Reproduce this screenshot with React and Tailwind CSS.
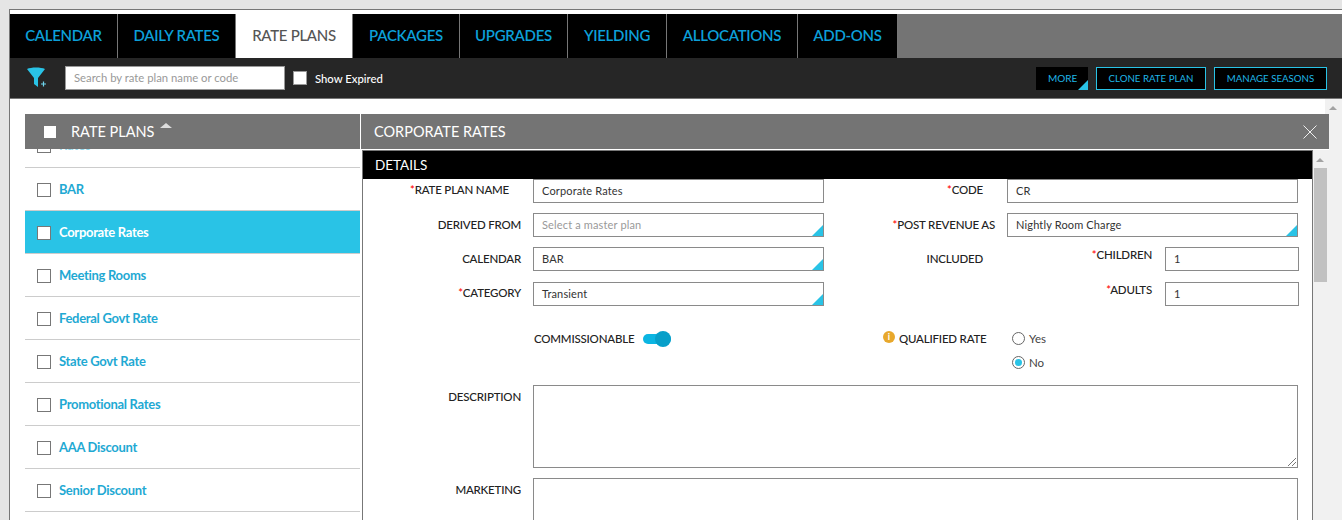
const tabs = [
  { label: "CALENDAR", w: "w-[108px]" },
  { label: "DAILY RATES", w: "w-[118px]" },
  { label: "RATE PLANS", w: "w-[117px]", active: true },
  { label: "PACKAGES", w: "w-[107px]" },
  { label: "UPGRADES", w: "w-[108px]" },
  { label: "YIELDING", w: "w-[99px]" },
  { label: "ALLOCATIONS", w: "w-[131px]" },
  { label: "ADD-ONS", w: "w-[100px]" },
];

const plans = [
  "BAR",
  "Corporate Rates",
  "Meeting Rooms",
  "Federal Govt Rate",
  "State Govt Rate",
  "Promotional Rates",
  "AAA Discount",
  "Senior Discount",
];

const Corner = ({ size = "border-l-[11px] border-b-[11px]" }) => (
  <span className={`absolute right-0 bottom-0 w-0 h-0 border-solid border-l-transparent border-b-[#29c3e6] ${size}`} />
);

const Label = ({ children, required, className = "" }) => (
  <div className={`text-[11.5px] leading-[15px] font-medium tracking-[-0.2px] text-[#222] text-right whitespace-nowrap ${className}`}>
    {required && <span className="text-[#f00]">*</span>}
    {children}
  </div>
);

const Field = ({ value, placeholder, select, className = "" }) => (
  <div className={`relative h-6 border border-[#8a8a8a] bg-white pl-2 text-[11px] leading-[21px] tracking-[0.15px] ${placeholder ? "text-[#999]" : "text-[#333]"} ${className}`}>
    {value || placeholder}
    {select && <Corner />}
  </div>
);

const Check = ({ className = "" }) => (
  <span className={`block w-[14px] h-[14px] border border-[#777] bg-white ${className}`} />
);

const App = () => {
  return (
    <div className="h-[520px] w-[1342px] overflow-hidden bg-[#e5e5e5] pt-[9px] pl-[9px] font-['Lato',sans-serif]">
      <div className="h-[511px] border-t border-l border-[#777] bg-white pt-1 overflow-hidden">
        {/* tabs */}
        <div className="flex h-11 bg-[#747474]">
          {tabs.map((t) => (
            <div
              key={t.label}
              className={`${t.w} flex items-center justify-center pb-[2px] border-r border-[#777] text-[15px] tracking-[-0.3px] ${
                t.active ? "bg-white text-[#555] font-medium" : "bg-black text-[#0c9fd8] font-semibold"
              }`}
            >
              {t.label}
            </div>
          ))}
        </div>

        {/* toolbar */}
        <div className="flex items-center h-[41px] bg-[#262626] border-b border-[#777] pr-[15px]">
          <svg viewBox="0 0 20 22" className="w-[20px] h-[22px] ml-[17px]">
            <path d="M0 2 C4 0 14 0 18 2 L11 11 L11 20 L7 17 L7 11 Z" fill="#29c3e6" />
            <path d="M14 17 h5 M16.5 14.5 v5" stroke="#6fd6ee" strokeWidth="1.2" />
          </svg>
          <div className="ml-[18px] w-[220px] h-6 border border-[#999] bg-white pl-2 text-[11.3px] leading-[22px] text-[#999]">
            Search by rate plan name or code
          </div>
          <Check className="ml-2 border-[#999]" />
          <span className="ml-2 mt-[2px] text-[11.3px] font-medium text-white">Show Expired</span>
          <div className="relative ml-auto w-[52px] h-[23px] bg-black pl-3 text-[10px] leading-[22px] text-[#1fb6e6]">
            MORE
            <Corner size="border-l-[10px] border-b-[10px]" />
          </div>
          <div className="ml-2 w-[110px] h-[23px] border border-[#29c3e6] bg-black text-center text-[9.7px] leading-[21px] text-[#1fb6e6]">
            CLONE RATE PLAN
          </div>
          <div className="ml-2 w-[113px] h-[23px] border border-[#29c3e6] bg-black text-center text-[9.7px] leading-[21px] text-[#1fb6e6]">
            MANAGE SEASONS
          </div>
        </div>

        {/* body */}
        <div className="flex h-[421px]">
          <div className="flex w-[1315px] shrink-0 pl-[15px] pt-[15px]">
            {/* list */}
            <div className="w-[335px] shrink-0">
              <div className="flex items-center h-[35px] bg-[#747474] pl-[19px] text-white">
                <span className="block w-3 h-3 bg-white" />
                <span className="ml-[15px] mt-px text-[14.5px] leading-none">RATE PLANS</span>
                <span className="ml-[6px] mb-3 w-0 h-0 border-x-[6px] border-x-transparent border-b-[5px] border-b-[#ddd]" />
              </div>
              <div className="flex h-[19px] border-b border-[#ccc] overflow-hidden pl-3">
                <Check className="-mt-[10px]" />
                <span className="ml-2 -mt-[12px] text-[13px] font-semibold leading-4 text-[#8fd6ea]">Rates</span>
              </div>
              {plans.map((p) => {
                const active = p === "Corporate Rates";
                return (
                  <div
                    key={p}
                    className={`flex items-center h-[43px] pt-[2px] border-b border-[#ccc] pl-3 text-[13px] font-bold tracking-[-0.3px] ${
                      active ? "bg-[#29c3e6] text-white" : "text-[#1fa9d3]"
                    }`}
                  >
                    <Check />
                    <span className="ml-2">{p}</span>
                  </div>
                );
              })}
            </div>

            {/* detail panel */}
            <div className="relative z-10 w-[969px] shrink-0 self-start bg-white">
              <div className="relative flex items-center h-[35px] border-l border-white bg-[#747474] pl-[13px] text-[14.5px] text-white">
                CORPORATE RATES
                <svg viewBox="0 0 14 14" className="absolute right-[12px] top-[11px] w-[14px] h-[14px]">
                  <path d="M0.5 0.5 L13.5 13.5 M13.5 0.5 L0.5 13.5" stroke="#eee" strokeWidth="1" />
                </svg>
              </div>
              <div className="flex mt-px ml-[2px]">
                <div className="w-[951px] h-[400px] border-l border-r border-t border-[#777] shrink-0">
                  <div className="h-7 bg-black pl-3 text-[13.5px] leading-[28px] text-white">DETAILS</div>
                  <div className="flex h-6">
                    <Label required className="w-[146px] mt-[3px]">RATE PLAN NAME</Label>
                    <Field value="Corporate Rates" className="ml-6 w-[291px]" />
                    <Label required className="w-[159px] mt-[3px]">CODE</Label>
                    <Field value="CR" className="ml-6 w-[291px]" />
                  </div>
                  <div className="flex h-6 mt-[10px]">
                    <Label className="w-[158px] mt-[4px]">DERIVED FROM</Label>
                    <Field placeholder="Select a master plan" select className="ml-[12px] w-[291px]" />
                    <Label required className="w-[171px] mt-[4px]">POST REVENUE AS</Label>
                    <Field value="Nightly Room Charge" select className="ml-3 w-[291px]" />
                  </div>
                  <div className="flex h-6 mt-[10px]">
                    <Label className="w-[158px] mt-[4px]">CALENDAR</Label>
                    <Field value="BAR" select className="ml-[12px] w-[291px]" />
                    <Label className="w-[159px] mt-[4px]">INCLUDED</Label>
                    <Label required className="w-[169px]">CHILDREN</Label>
                    <Field value="1" className="ml-[13px] w-[134px]" />
                  </div>
                  <div className="flex h-6 mt-[11px]">
                    <Label required className="w-[158px] mt-[3px]">CATEGORY</Label>
                    <Field value="Transient" select className="ml-[12px] w-[291px]" />
                    <Label required className="w-[328px]">ADULTS</Label>
                    <Field value="1" className="ml-[13px] w-[134px]" />
                  </div>
                  <div className="flex h-[58px] mt-[21px]">
                    <div className="flex items-start ml-[171px] w-[290px]">
                      <Label className="mt-[4px]">COMMISSIONABLE</Label>
                      <span className="relative ml-[9px] mt-[7px] w-[28px] h-[10px] rounded-full bg-[#0bb5e2]">
                        <span className="absolute right-0 -top-[3px] w-4 h-4 rounded-full bg-[#079fc9]" />
                      </span>
                    </div>
                    <div className="flex items-start ml-[59px] mt-[4px]">
                      <span className="w-[12px] h-[12px] rounded-full bg-[#e8a82c] text-white text-[9px] leading-[12px] font-bold text-center">i</span>
                      <Label className="ml-[4px] w-[88px] !text-left">QUALIFIED RATE</Label>
                      <div className="ml-[25px] flex flex-col gap-[9px]">
                        <div className="flex items-center h-[15px] text-[11.5px] text-[#444]">
                          <span className="w-[13px] h-[13px] rounded-full border border-[#666]" />
                          <span className="ml-[4px]">Yes</span>
                        </div>
                        <div className="flex items-center h-[15px] text-[11.5px] text-[#444]">
                          <span className="flex items-center justify-center w-[13px] h-[13px] rounded-full border border-[#666]">
                            <span className="w-[7px] h-[7px] rounded-full bg-[#29c3e6]" />
                          </span>
                          <span className="ml-[4px]">No</span>
                        </div>
                      </div>
                    </div>
                  </div>
                  <div className="flex h-[83px]">
                    <Label className="w-[158px] mt-[4px]">DESCRIPTION</Label>
                    <div className="relative ml-[12px] w-[765px] border border-[#8a8a8a]">
                      <svg viewBox="0 0 8 8" className="absolute right-px bottom-px w-2 h-2">
                        <path d="M0 8 L8 0 M4 8 L8 4" stroke="#777" strokeWidth="1" />
                      </svg>
                    </div>
                  </div>
                  <div className="flex h-20 mt-[10px]">
                    <Label className="w-[158px] mt-[4px]">MARKETING</Label>
                    <div className="ml-[12px] w-[765px] border border-[#8a8a8a]" />
                  </div>
                </div>

                {/* inner scrollbar */}
                <div className="relative w-[16px] h-[400px] bg-[#f1f1f1] pt-[18px] pl-px pr-[2px]">
                  <span className="absolute left-[3px] top-[8px] w-0 h-0 border-x-[4px] border-x-transparent border-b-[4px] border-b-[#a3a3a3]" />
                  <div className="h-[114px] bg-[#c1c1c1]" />
                </div>
              </div>
            </div>
          </div>

          {/* page scrollbar */}
          <div className="relative w-[17px] shrink-0 bg-[#f1f1f1]">
            <span className="absolute left-[4px] top-[7px] w-0 h-0 border-x-[4px] border-x-transparent border-b-[4px] border-b-[#a3a3a3]" />
          </div>
        </div>
      </div>
    </div>
  );
};

export default App;
